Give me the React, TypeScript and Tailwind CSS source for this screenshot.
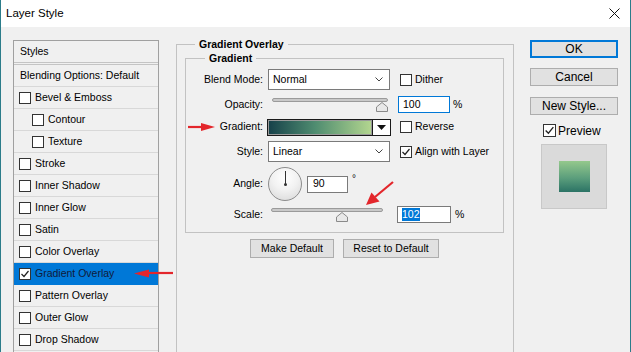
import React from 'react';

const styleItems: { name: string; sub?: boolean; checked?: boolean; selected?: boolean }[] = [
    { name: 'Bevel & Emboss' },
    { name: 'Contour', sub: true },
    { name: 'Texture', sub: true },
    { name: 'Stroke' },
    { name: 'Inner Shadow' },
    { name: 'Inner Glow' },
    { name: 'Satin' },
    { name: 'Color Overlay' },
    { name: 'Gradient Overlay', checked: true, selected: true },
    { name: 'Pattern Overlay' },
    { name: 'Outer Glow' },
    { name: 'Drop Shadow' },
    { name: '' }
];

// little tick used by the checked boxes
const Check = ({ size = 12 }: { size?: number }) => (
    <svg width={size - 2} height={size - 2} viewBox="0 0 10 10">
        <polyline points="1.5,5 4,7.5 8.5,2" fill="none" stroke="#222" strokeWidth="1.2" />
    </svg>
);

const CheckBox = ({ checked, size = 12 }: { checked?: boolean; size?: number }) => (
    <div
        className="flex items-center justify-center border border-[#333] bg-white shrink-0"
        style={{ width: size, height: size }}
    >
        {checked && <Check size={size} />}
    </div>
);

const Chevron = () => (
    <svg width="8" height="5" viewBox="0 0 8 5">
        <polyline points="0.5,0.5 4,4 7.5,0.5" fill="none" stroke="#444" strokeWidth="1" />
    </svg>
);

const Select = ({ value }: { value: string }) => (
    <div className="w-[122px] h-[21px] border border-[#7a7a7a] bg-white flex items-center justify-between pl-[4px] pr-[6px]">
        <span>{value}</span>
        <Chevron />
    </div>
);

const Slider = ({ thumb, trackLeft, trackWidth }: { thumb: number; trackLeft: number; trackWidth: number }) => (
    <div className="relative w-[122px] h-[17px]">
        <div
            className="mt-[4px] h-[4px] rounded-full border border-[#9a9a9a] bg-[#c9c9c9]"
            style={{ marginLeft: trackLeft, width: trackWidth }}
        />
        {/* thumb sits over the track */}
        <svg className="absolute top-[4px]" style={{ left: thumb - 6 }} width="12" height="10" viewBox="0 0 12 10">
            <polygon points="6,0.5 11.5,5 11.5,9.5 0.5,9.5 0.5,5" fill="#e8e8e8" stroke="#8a8a8a" strokeWidth="1" />
        </svg>
    </div>
);

const Label = ({ children }: { children: React.ReactNode }) => (
    <div className="w-[78px] text-right pr-[1px]">{children}</div>
);

const Button = ({ children, className = '' }: { children: React.ReactNode; className?: string }) => (
    <div className={`flex items-center justify-center bg-[#e1e1e1] border border-[#adadad] ${className}`}>
        {children}
    </div>
);

export default function App() {
    return (
        <div
            className="relative w-[631px] h-[352px] overflow-hidden bg-[#f0f0f0] border-x border-[#2b7c8a] flex flex-col text-[10.5px] text-black"
            style={{ fontFamily: '"Liberation Sans", Arial, sans-serif' }}
        >
            {/* title bar */}
            <div className="h-[27px] bg-white flex items-center justify-between pl-[5px] pr-[10px] shrink-0">
                <span className="text-[11.5px]">Layer Style</span>
                <svg width="11" height="11" viewBox="0 0 11 11">
                    <path d="M0.5 0.5 L10.5 10.5 M10.5 0.5 L0.5 10.5" stroke="#111" strokeWidth="1" />
                </svg>
            </div>

            <div className="flex-1 flex items-start">
                {/* styles list */}
                <div className="ml-[12px] mt-[13px] w-[146px] h-[320px] border border-[#a0a0a0] flex flex-col shrink-0">
                    <div className="h-[21px] shrink-0 flex items-center pl-[6px]">Styles</div>
                    <div className="h-[3px] shrink-0 border-y border-[#c4c4c4]" />
                    <div className="h-[22px] shrink-0 flex items-center pl-[6px] border-b border-[#d8d8d8]">
                        Blending Options: Default
                    </div>
                    {styleItems.map((item, i) => (
                        <div
                            key={i}
                            className={`h-[22px] shrink-0 flex items-center gap-[4px] border-b ${
                                item.selected
                                    ? 'bg-[#0078d7] border-[#0078d7] text-[#101a3a]'
                                    : 'border-[#d8d8d8]'
                            } ${item.sub ? 'pl-[18px]' : 'pl-[5px]'}`}
                        >
                            {item.name && <CheckBox checked={item.checked} />}
                            <span>{item.name}</span>
                        </div>
                    ))}
                </div>

                {/* gradient overlay group */}
                <fieldset className="ml-[17px] mt-[10px] w-[338px] h-[330px] shrink-0 border border-[#c2c2c2]">
                    <legend className="ml-[18px] px-[4px] font-bold leading-[14px]">Gradient Overlay</legend>
                    <fieldset className="ml-[8px] w-[319px] h-[182px] border border-[#c2c2c2]">
                        <legend className="ml-[19px] px-[4px] font-bold leading-[14px]">Gradient</legend>
                        <div className="flex flex-col">
                            <div className="mt-[4px] h-[21px] flex items-center">
                                <Label>Blend Mode:</Label>
                                <div className="ml-[4px]">
                                    <Select value="Normal" />
                                </div>
                                <div className="ml-[10px] flex items-center gap-[3px]">
                                    <CheckBox />
                                    <span>Dither</span>
                                </div>
                            </div>

                            <div className="mt-[6px] h-[17px] flex items-center">
                                <Label>Opacity:</Label>
                                <div className="ml-[4px]">
                                    <Slider thumb={114} trackLeft={4} trackWidth={116} />
                                </div>
                                <div className="ml-[8px] w-[52px] h-[17px] border border-[#0078d7] bg-white flex items-center pl-[4px]">
                                    100
                                </div>
                                <span className="ml-[3px]">%</span>
                            </div>

                            <div className="mt-[5px] h-[18px] flex items-center">
                                <Label>Gradient:</Label>
                                <div className="ml-[3px] w-[124px] h-[17px] border border-[#1a1a1a] flex bg-white">
                                    <div className="flex-1 border border-[#9a9a9a] bg-[linear-gradient(to_right,#17424a,#4f8c70_45%,#b2d58f)]" />
                                    <div className="w-[18px] border-l border-[#1a1a1a] flex items-center justify-center">
                                        <svg width="9" height="5" viewBox="0 0 9 5">
                                            <polygon points="0,0 9,0 4.5,5" fill="#111" />
                                        </svg>
                                    </div>
                                </div>
                                <div className="ml-[9px] flex items-center gap-[3px]">
                                    <CheckBox />
                                    <span>Reverse</span>
                                </div>
                            </div>

                            <div className="mt-[5px] h-[21px] flex items-center">
                                <Label>Style:</Label>
                                <div className="ml-[4px]">
                                    <Select value="Linear" />
                                </div>
                                <div className="ml-[10px] flex items-center gap-[3px]">
                                    <CheckBox checked />
                                    <span>Align with Layer</span>
                                </div>
                            </div>

                            <div className="mt-[5px] h-[34px] flex items-center">
                                <Label>Angle:</Label>
                                <div className="ml-[4px] w-[34px] h-[34px] rounded-full border border-[#8c8c8c] bg-[radial-gradient(circle_at_50%_30%,#ffffff,#f2f2f2_45%,#d6d6d6)] flex justify-center">
                                    <div className="flex flex-col items-center">
                                        <div className="mt-[3px] w-[1px] h-[13px] bg-[#333]" />
                                        <div className="w-[3px] h-[3px] rounded-full bg-[#333] -mt-[1px]" />
                                    </div>
                                </div>
                                <div className="ml-[5px] w-[41px] h-[17px] border border-[#7a7a7a] bg-white flex items-center pl-[5px]">
                                    90
                                </div>
                                <span className="ml-[4px] self-start mt-[7px] text-[10px] leading-[10px] text-[#111]">°</span>
                            </div>

                            <div className="mt-[5px] h-[17px] flex items-center">
                                <Label>Scale:</Label>
                                <div className="ml-[4px]">
                                    <Slider thumb={74} trackLeft={3} trackWidth={112} />
                                </div>
                                <div className="ml-[7px] w-[54px] h-[17px] border border-[#7a7a7a] bg-white flex items-center pl-[4px]">
                                    <span className="bg-[#0078d7] text-white leading-[13px]">102</span>
                                </div>
                                <span className="ml-[4px]">%</span>
                            </div>
                        </div>
                    </fieldset>

                    <div className="mt-[6px] flex">
                        <Button className="ml-[73px] w-[84px] h-[19px]">Make Default</Button>
                        <Button className="ml-[9px] w-[96px] h-[19px]">Reset to Default</Button>
                    </div>
                </fieldset>

                {/* buttons + preview */}
                <div className="ml-[16px] mt-[13px] w-[88px] flex flex-col text-[12px] leading-[14px] shrink-0">
                    <div className="h-[18px] bg-[#e1e1e1] border-2 border-[#0078d7] flex items-center justify-center">
                        OK
                    </div>
                    <Button className="mt-[10px] h-[18px]">Cancel</Button>
                    <Button className="mt-[11px] h-[18px]">New Style...</Button>
                    <div className="mt-[9px] ml-[13px] h-[13px] flex items-center gap-[2px]">
                        <CheckBox checked size={13} />
                        <span>Preview</span>
                    </div>
                    <div className="mt-[7px] ml-[11px] w-[66px] h-[65px] bg-[#dadada] border border-[#c8c8c8] flex items-center justify-center">
                        <div className="w-[31px] h-[31px] bg-[linear-gradient(to_bottom,#94c88c,#5b9e7c_55%,#2b7365)]" />
                    </div>
                </div>
            </div>

            {/* red annotation arrows */}
            <svg className="absolute inset-0 pointer-events-none" width="631" height="352" viewBox="0 0 631 352">
                <g fill="#e3262b" stroke="#e3262b">
                    <line x1="172" y1="273" x2="146" y2="273" strokeWidth="2.2" />
                    <polygon points="133,273.5 148,269.5 148,277.5" stroke="none" />
                    <line x1="187" y1="127" x2="201" y2="127" strokeWidth="2.2" />
                    <polygon points="214,127 200,123 200,131" stroke="none" />
                    <line x1="392" y1="182" x2="374" y2="197" strokeWidth="2.2" />
                    <polygon points="365,205 370.5,192.5 378.5,201.5" stroke="none" />
                </g>
            </svg>
        </div>
    );
}
